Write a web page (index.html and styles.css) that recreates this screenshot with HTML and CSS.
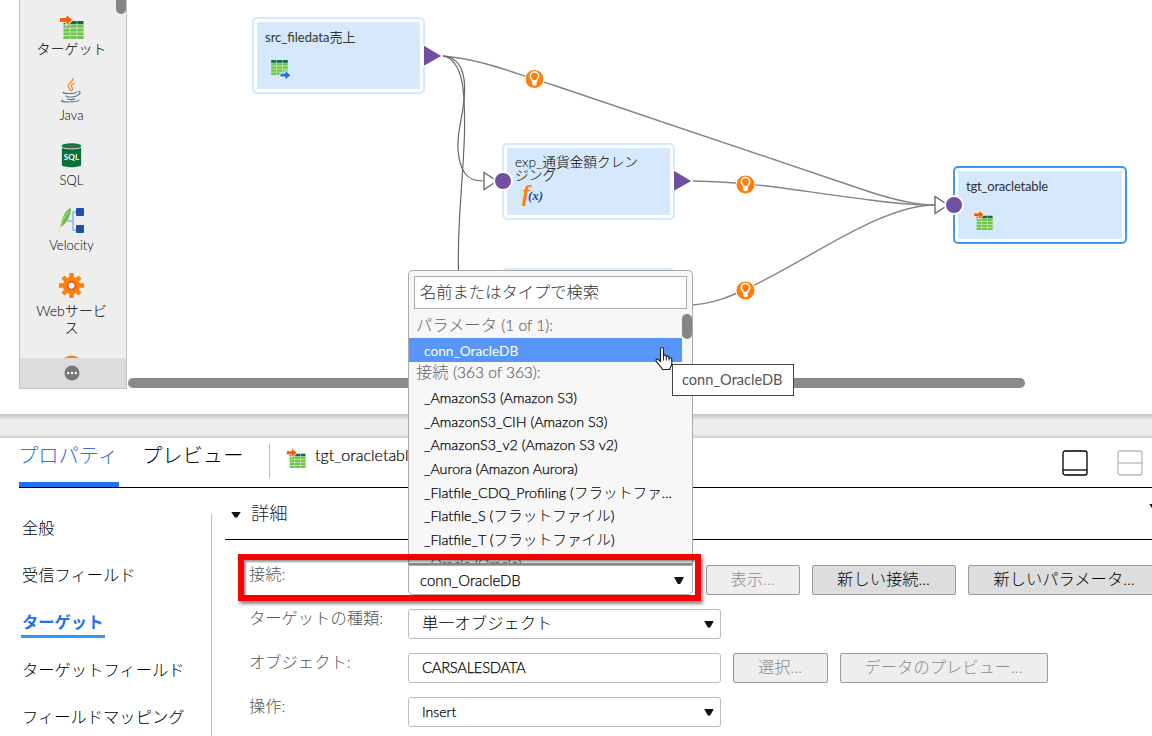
FILE: index.html
```
<!DOCTYPE html>
<html lang="ja">
<head>
<meta charset="utf-8">
<title>Mapping designer</title>
<link rel="stylesheet" href="styles.css">
</head>
<body>
<svg class="defs" aria-hidden="true">
  <symbol id="table" viewBox="0 0 20 18">
    <path fill="#c5e9b5" d="M0 0h20v18H0z"/>
    <path fill="#176b4c" d="M0 0h6.300v3.200H0zM6.900 0h6.300v3.200H6.900zM13.800 0H20v3.200h-6.200z"/>
    <path fill="#72c54c" d="M0 4h6.100v2.700H0zM6.900 4h6.100v2.700H6.900zM13.800 4H20v2.700h-6.200zM0 7.700h6.100v2.700H0zM6.900 7.700h6.100v2.700H6.900zM13.800 7.700H20v2.700h-6.200zM0 11.400h6.100v2.700H0zM6.900 11.400h6.100v2.700H6.900zM13.800 11.400H20v2.700h-6.200zM0 15.100h6.100V18H0zM6.900 15.100h6.100V18H6.900zM13.800 15.100H20V18h-6.200z"/>
  </symbol>
  <symbol id="target" viewBox="0 0 25 25">
    <use href="#table" x="4" y="7" width="21" height="18"/>
    <path fill="#ff5c0a" stroke="#fff" stroke-width="1" d="M.5 3.500h6.500V0l7 6-7 6V8.500H.5z"/>
  </symbol>
  <symbol id="source" viewBox="0 0 20 20">
    <use href="#table" x="0" y="0" width="17" height="15"/>
    <path fill="#2472e8" stroke="#fff" stroke-width=".8" d="M9 13.200h5V10l6 5.200-6 5V17H9z"/>
  </symbol>
  <symbol id="bulb" viewBox="0 0 20 20">
    <circle cx="10" cy="10" r="9.500" fill="#ff7f0a" stroke="#fff"/>
    <path fill="none" stroke="#fff" stroke-width="1.500" d="M8 12c0-1.500-2.200-2.500-2.200-4.700a4.200 4.200 0 0 1 8.400 0c0 2.200-2.200 3.200-2.200 4.700z"/>
    <path fill="#fff" d="M7.800 11.500h4.400v4.300q-2.200 1.800-4.400 0z"/>
  </symbol>
  <symbol id="gear" viewBox="0 0 26 26">
    <g fill="#ff7f0a"><circle cx="13" cy="13" r="9"/>
      <path d="M10.700 0h4.600v26h-4.600zM0 10.700h26v4.600H0z"/>
      <path transform="rotate(45 13 13)" d="M10.700 .5h4.600v25h-4.600zM.5 10.700h25v4.600H.5z"/></g>
    <circle cx="13" cy="13" r="4" fill="#eee" stroke="#d94e2a" stroke-width="1.500"/>
  </symbol>
</svg>

<main class="designer">
  <aside class="palette">
    <div class="palette-list">
      <div class="tool first"><svg class="tool-icon"><use href="#target"/></svg><span class="jp">ターゲット</span></div>
      <div class="tool">
        <svg class="tool-icon" viewBox="0 0 25 25" fill="none">
          <path stroke="#f58b2b" stroke-width="1.300" d="M14 0c1 4-6 5-4.500 9 .5 1.500 2 2 2 4M16 5c-3 1-4.500 2.500-3 4.500 1 1.500.5 2.500-1 3.500"/>
          <path stroke="#4d7597" stroke-width="1.100" d="M5 14c-2 1 0 1.500 5 1.500s7-.7 8-1.300M7 17.500c0 2 8 2 11 .3M8 20.500c1 1.500 6 1.500 8 .3M19 13.500c3-.5 3 3-1 4M4 22c-3 1-1 2 5 2s11-.8 11-2.500"/>
        </svg><span>Java</span></div>
      <div class="tool">
        <svg class="tool-icon" viewBox="0 0 25 26">
          <path fill="#06713b" d="M2.500 3v20c0 3 20 3 20 0V3z"/><ellipse cx="12.500" cy="3" rx="10" ry="2.800" fill="#06713b"/>
          <ellipse cx="12.500" cy="3" rx="8" ry="1.500" fill="#3a6a50"/><path d="M2.500 4.200c2 2.500 18 2.500 20 0" fill="none" stroke="#eee"/>
          <text class="sql-mark" x="12.500" y="18" text-anchor="middle">SQL</text>
        </svg><span>SQL</span></div>
      <div class="tool">
        <svg class="tool-icon" viewBox="0 0 25 25">
          <path d="M8 13h6M18 4h-4v18h4" fill="none" stroke="#79b9ee" stroke-width="1.400"/>
          <rect x="17" y="0" width="8" height="8" rx="1" fill="#204fa8"/><rect x="17" y="17" width="8" height="8" rx="1" fill="#204fa8"/>
          <path d="M11.800 0C7 1 2 11 1.500 19 6 17.500 13 7 11.800 0z" fill="#6dbd45"/><path d="M0 25C1 17 5 9 10 3" fill="none" stroke="#bfe3ad" stroke-width=".8"/>
        </svg><span>Velocity</span></div>
      <div class="tool"><svg class="tool-icon"><use href="#gear"/></svg><span class="jp">Webサービス</span></div>
      <div class="tool tool-last"><svg class="tool-icon" viewBox="0 0 25 25"><circle cx="12.500" cy="12.500" r="12" fill="#ff7f0a"/></svg></div>
    </div>
    <div class="palette-more"><svg viewBox="0 0 16 16"><circle cx="8" cy="8" r="7.500" fill="#777"/><g fill="#fff"><circle cx="4.200" cy="8" r="1.200"/><circle cx="8" cy="8" r="1.200"/><circle cx="11.800" cy="8" r="1.200"/></g></svg></div>
    <div class="palette-thumb"></div>
  </aside>

  <section class="canvas">
    <div class="node node-src"><span>src_filedata売上</span><svg class="src-icon"><use href="#source"/></svg></div>
    <div class="node node-exp"><span>exp_通貨金額クレン<br>ジング</span><div class="fx"><i>f</i><b>(x)</b></div></div>
    <div class="node node-third"></div>
    <div class="node node-tgt"><span>tgt_oracletable</span><svg class="tgt-icon"><use href="#target"/></svg></div>
    <svg class="edges" viewBox="0 0 1152 414">
      <g fill="none" stroke="#848484" stroke-width="1.400">
        <path d="M443 56C485 60 513 73 553 85L870 192Q910 205 935 205"/>
        <path stroke="#666" stroke-width="1.200" d="M443 56C465 58 467 82 463 108C460 128 457 135 458 150C460 172 467 181 483 181"/>
        <path stroke="#666" stroke-width="1.200" d="M443 56C465 60 465 98 464.500 133C463 185 457 220 458.500 272"/>
        <path d="M693 181C760 182 810 193 870 200Q905 205 935 205"/>
        <path d="M692 305C716 303 731 296 746 289C806 262 880 205 935 205"/>
      </g>
      <g fill="#70509f" stroke="#fff" stroke-width="1">
        <path d="M423.500 45v21.500L442 56zM673.500 170v21.500L692 181z"/>
      </g>
      <path d="M484 172.500v17l13-8.500zM935 196.500v17l13-8.500z" fill="#fff" stroke="#666" stroke-width="1.300"/>
      <g fill="#70509f" stroke="#fff" stroke-width="2"><circle cx="503" cy="181" r="9"/><circle cx="954" cy="205" r="9"/></g>
      <use href="#bulb" x="524.500" y="69" width="20" height="20"/>
      <use href="#bulb" x="735.500" y="174.500" width="20" height="20"/>
      <use href="#bulb" x="735.500" y="280.500" width="20" height="20"/>
    </svg>
    <div class="canvas-thumb"></div>
  </section>
</main>

<div class="splitter"></div>

<section class="panel">
  <header class="tabs">
    <div class="tab active">プロパティ</div>
    <div class="tab">プレビュー</div>
    <div class="selected"><svg><use href="#target"/></svg><span>tgt_oracletable</span></div>
    <div class="views">
      <svg viewBox="0 0 26 26" fill="none" stroke="#000" stroke-width="1.300"><rect x="1" y="1" width="24" height="24" rx="2"/><path d="M1 20h24"/></svg>
      <svg viewBox="0 0 26 26" fill="none" stroke="#b8b8b8" stroke-width="1.300"><rect x="1" y="1" width="24" height="24" rx="2"/><path d="M1 13h24"/></svg>
    </div>
  </header>
  <div class="content">
    <nav class="side">
      <span>全般</span><span>受信フィールド</span><span class="current">ターゲット</span><span>ターゲットフィールド</span><span>フィールドマッピング</span>
    </nav>
    <div class="form">
      <div class="section"><i class="caret"></i><span>詳細</span><i class="caret end"></i></div>
      <div class="row"><label>接続:</label><div class="field connection"><span>conn_OracleDB</span><i class="caret"></i></div><button class="b-view" disabled>表示...</button><button class="b-conn">新しい接続...</button><button class="b-param">新しいパラメータ...</button></div>
      <div class="row"><label>ターゲットの種類:</label><div class="field"><span class="jp">単一オブジェクト</span><i class="caret"></i></div></div>
      <div class="row"><label>オブジェクト:</label><div class="field"><span class="caps">CARSALESDATA</span></div><button class="b-select" disabled>選択...</button><button class="b-data" disabled>データのプレビュー...</button></div>
      <div class="row"><label>操作:</label><div class="field"><span class="insert">Insert</span><i class="caret"></i></div></div>
    </div>
  </div>
</section>

<div class="dropdown">
  <div class="search">名前またはタイプで検索</div>
  <div class="options">
    <div class="group">パラメータ <span>(1 of 1):</span></div>
    <div class="option chosen">conn_OracleDB</div>
    <div class="group second">接続 <span>(363 of 363):</span></div>
    <div class="option">_AmazonS3 (Amazon S3)</div>
    <div class="option">_AmazonS3_CIH (Amazon S3)</div>
    <div class="option">_AmazonS3_v2 (Amazon S3 v2)</div>
    <div class="option">_Aurora (Amazon Aurora)</div>
    <div class="option">_Flatfile_CDQ_Profiling (<span>フラットファ</span>...</div>
    <div class="option">_Flatfile_S (<span>フラットファイル</span>)</div>
    <div class="option">_Flatfile_T (<span>フラットファイル</span>)</div>
    <div class="option faded">_Oracle (Oracle)</div>
  </div>
  <div class="list-thumb"></div>
</div>
<div class="highlight"></div>
<div class="tooltip">conn_OracleDB</div>
<svg class="pointer" viewBox="0 0 18 24"><path fill="#fff" stroke="#222" stroke-width="1.200" stroke-linejoin="round" d="M5.500 15V2.500c0-2 3-2 3 0V10c0-2 2.800-1.800 2.800 0v.8c.2-1.700 2.700-1.500 2.700.3v1c.3-1.400 2.800-1 2.800.8V17c0 3-2 3.500-2 6H7.500C6 19.500 3 18 1.200 14.500c-.7-1.700 1-2.600 2.300-1.300z"/><path stroke="#222" d="M8.500 10v4M11.300 11v3M14 12v2"/></svg>
</body>
</html>
```
FILE: styles.css
```
* { box-sizing: border-box; }
body {
  margin: 0; width: 1152px; height: 736px; overflow: hidden; position: relative;
  display: flex; flex-direction: column; background: #fff; color: #000;
  font: 300 14px/1.2 Lato, "Noto Sans CJK JP", sans-serif;
}
.defs { position: absolute; width: 0; height: 0; }
svg { display: block; flex: none; }

.designer { position: relative; flex: none; height: 414px; padding-left: 19px; }
.palette {
  position: relative; width: 108px; height: 389px; display: flex; flex-direction: column;
  background: #eee; border: solid #c3c3c3; border-width: 0 1px 1px;
}
.palette-list { flex: 1; min-height: 0; overflow: hidden; padding-top: 14px; }
.tool { height: 65px; display: flex; flex-direction: column; align-items: center; font-size: 13px; line-height: 16px; text-align: center; padding-right: 3px; }
.tool-icon { width: 25px; height: 25px; margin-bottom: 4px; }
.tool .jp { font-size: 14px; width: 74px; line-height: 17px; }
.tool.first { height: 64px; }
.tool.first .tool-icon { margin-bottom: 1px; }
.tool:nth-child(5) { height: 82px; }
.tool-last { height: 25px; }
.sql-mark { font: bold 8.500px Lato, sans-serif; fill: #fff; }
.palette-more { height: 30px; background: #dcdcdc; display: flex; align-items: center; justify-content: center; }
.palette-more svg { width: 16px; height: 16px; margin: -1px 2px 0 0; }
.palette-thumb { position: absolute; right: 0; top: -10px; width: 10px; height: 24px; border-radius: 5px; background: #858585; }

.canvas { position: absolute; inset: 0; pointer-events: none; }
.edges { position: absolute; left: 0; top: 0; width: 1152px; height: 414px; }
.node {
  position: absolute; width: 173px; height: 77px; padding: 10px 8px; border: 2px solid #d5e9fc; border-radius: 5px;
  background: #d6e8fc; box-shadow: inset 0 0 0 3px #fff; font-weight: 400; font-size: 13px; line-height: 17px; color: #333;
}
.node-src { left: 252px; top: 17px; padding-left: 11px; }
.node-exp { left: 502px; top: 143px; padding: 11px; font-size: 13.700px; line-height: 12.500px; font-weight: 300; color: #000; white-space: nowrap; }
.node-third { left: 502px; top: 268px; }
.node-tgt { left: 953px; top: 166px; width: 174px; height: 78px; padding-left: 11px; border-color: #4298f7; letter-spacing: -.2px; }
.src-icon { width: 20px; height: 20px; margin: 14px 0 0 6px; }
.tgt-icon { width: 20px; height: 20px; margin: 15px 0 0 7px; }
.fx { display: flex; align-items: center; padding-left: 7px; height: 20px; margin-top: 2px; font-family: "Liberation Serif", serif; }
.fx i { font-size: 24px; font-weight: bold; color: #ff7f0a; }
.fx b { font-size: 13px; font-weight: bold; font-style: italic; color: #21489a; padding-top: 6px; margin-left: -2px; }
.canvas-thumb { position: absolute; left: 128px; top: 378px; width: 897px; height: 10px; border-radius: 5px; background: #8a8a8a; }

.splitter { flex: none; height: 24px; background: linear-gradient(#c4c4c4, #ddd 4px, #eee 6px, #eee 20px, #ccc); }

.panel { flex: 1; min-height: 0; display: flex; flex-direction: column; }
.tabs { flex: none; height: 50px; margin-left: 19px; border-bottom: 1px solid #000; display: flex; gap: 24px; }
.tab { width: 100px; height: 49px; font-size: 20.300px; line-height: 35px; white-space: nowrap; text-indent: -1px; }
.tab.active { color: #4169e1; border-bottom: 5px solid #1d72ed; }
.selected { display: flex; align-items: center; gap: 9px; height: 34px; margin: 6px 0 0 2px; padding-left: 16px; border-left: 1px solid #bbb; font-size: 16px; -webkit-text-stroke: .2px; }
.selected svg { width: 20px; height: 20px; margin-top: -6px; }
.selected span { margin-top: -12px; }
.views { display: flex; gap: 29px; margin: 12px 9px 0 auto; }
.views svg { width: 26px; height: 26px; }
.content { flex: 1; min-height: 0; display: flex; }
.side {
  width: 212px; height: 222px; margin: 26px 13px 0 0; padding: 2px 0 0 22px; border-right: 1px solid #bbb;
  display: flex; flex-direction: column; align-items: flex-start; gap: 23.300px;
  font-size: 16.300px; line-height: 24px; white-space: nowrap;
}
.side span { height: 24px; flex: none; }
.side .current { color: #276fed; font-weight: 700; position: relative; line-height: 22px; }
.side .current::after { content: ""; position: absolute; left: -1px; right: -2px; bottom: -3px; height: 3px; background: #3196fc; }
.form { flex: 1; min-width: 0; overflow: hidden; }
.section { height: 52px; border-bottom: 1px solid #000; display: flex; align-items: center; gap: 10px; padding-left: 6px; font-size: 18.300px; color: #222; margin-bottom: 25px; }
.caret { width: 10px; height: 7px; background: #111; clip-path: polygon(0 0, 100% 0, 62% 100%, 38% 100%); flex: none; }
.section .caret { height: 6px; }
.section .caret:first-child { margin-top: 2px; }
.section .end { margin: -14px -7px 0 auto; }
.row { height: 30px; margin-bottom: 14px; padding-left: 24px; display: flex; white-space: nowrap; }
.row label { width: 159px; flex: none; font-size: 16.300px; line-height: 17px; color: #555; }
.field { flex: none; width: 313px; height: 30px; border: 1px solid #bbb; border-radius: 3px; padding: 0 6px 0 13px; display: flex; align-items: center; justify-content: space-between; margin-right: 12px; font-size: 14.900px; -webkit-text-stroke: .25px; }
.field .jp { font-size: 16.300px; margin-top: -2px; -webkit-text-stroke: 0; }
.field .caps { font-size: 14.900px; letter-spacing: -.35px; }
.field .insert { font-size: 14px; }
.connection { width: 285px; margin-right: 13px; padding: 1px 8px 0 11px; border-color: #aaa; border-radius: 0 0 5px 5px; }
button { flex: none; height: 30px; border: 1px solid #999; border-radius: 2px; background: #ddd; color: #000; font: 300 16.300px Lato, "Noto Sans CJK JP", sans-serif; margin: 0 12px 0 0; padding: 0 1px 4px 0; }
button:disabled { background: #eee; color: #8c8c8c; }
.b-view { width: 94px; } .b-conn { width: 144px; } .b-param { width: 196px; padding-right: 4px; } .b-select { width: 95px; } .b-data { width: 208px; }

.dropdown { position: absolute; left: 408px; top: 270px; width: 285px; height: 295px; border: 1px solid #aaa; border-bottom: 2px solid #888; border-radius: 5px 5px 0 0; background: #f7f7f7; overflow: hidden; padding-top: 5px; }
.search { margin: 0 5px; height: 33px; border: 1px solid #aaa; background: #fff; padding-left: 5px; font-size: 16.300px; line-height: 29px; color: #333; white-space: nowrap; }
.options { width: 273px; margin-top: 5px; }
.group { height: 24px; line-height: 21px; padding-left: 7px; font-size: 16.300px; color: #666; white-space: nowrap; }
.group.second { line-height: 19px; }
.group span { font-size: 15.500px; -webkit-text-stroke: .2px; }
.option { height: 23.700px; line-height: 23px; padding-left: 15px; font-size: 14.300px; white-space: nowrap; -webkit-text-stroke: .25px; }
.option span { font-size: 14.700px; -webkit-text-stroke: 0; }
.option.chosen { height: 24px; line-height: 25px; background: #5896fb; color: #fff; font-size: 13.700px; font-weight: 400; -webkit-text-stroke: 0; }
.faded { color: #666; }
.list-thumb { position: absolute; right: 0; top: 43px; width: 10px; height: 25px; border-radius: 5px; background: #858585; }
.highlight { position: absolute; left: 238px; top: 554px; width: 463px; height: 47px; border: 6px solid #f90000; box-shadow: 2px 3px 3px rgba(0,0,0,.45), inset 2px 2px 2px rgba(0,0,0,.4); }
.tooltip { position: absolute; left: 672px; top: 364px; width: 122px; height: 32px; border: 1px solid #444; background: #fff; padding-left: 9px; line-height: 30px; font-size: 14.600px; font-weight: 400; color: #555; }
.pointer { position: absolute; left: 655px; top: 346px; width: 18px; height: 25px; }
```
